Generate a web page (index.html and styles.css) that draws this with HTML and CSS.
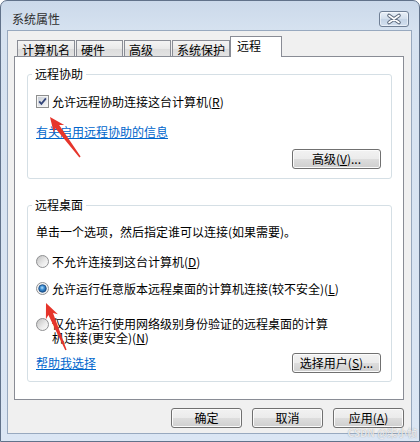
FILE: index.html
```html
<!DOCTYPE html>
<html lang="zh-CN">
<head>
    <meta charset="UTF-8">
    <title>系统属性</title>
    <link rel="stylesheet" href="styles.css">
</head>
<body>

<div class="window">
    <!-- shared gradients for the checkbox / radio glyphs -->
    <svg class="defs" width="0" height="0" aria-hidden="true">
        <defs>
            <linearGradient id="boxFill" x1="0" y1="0" x2="1" y2="1">
                <stop offset="0" stop-color="#c9ced6"/>
                <stop offset="1" stop-color="#f7f7f7"/>
            </linearGradient>
            <linearGradient id="radioFill" x1="0" y1="0" x2="1" y2="1">
                <stop offset="0" stop-color="#bdbdbd"/>
                <stop offset="0.6" stop-color="#ececec"/>
                <stop offset="1" stop-color="#fdfdfd"/>
            </linearGradient>
            <radialGradient id="radioDot" cx="0.45" cy="0.4" r="0.6">
                <stop offset="0" stop-color="#b9e2fb"/>
                <stop offset="0.45" stop-color="#3d8fd4"/>
                <stop offset="1" stop-color="#164f8f"/>
            </radialGradient>
        </defs>
    </svg>

    <div class="titlebar">
        <span class="title">系统属性</span>
        <button class="close-button" aria-label="关闭">
            <svg width="28" height="14" viewBox="0 0 28 14">
                <path d="M9 3.5 L19 10.5 M19 3.5 L9 10.5" stroke="#5b687b" stroke-width="3.6" stroke-linecap="round"/>
                <path d="M9 3.5 L19 10.5 M19 3.5 L9 10.5" stroke="#ffffff" stroke-width="1.6" stroke-linecap="round"/>
            </svg>
        </button>
    </div>

    <div class="client">
        <div class="tabs">
            <div class="tab">计算机名</div>
            <div class="tab">硬件</div>
            <div class="tab">高级</div>
            <div class="tab">系统保护</div>
            <div class="tab selected">远程</div>
        </div>

        <div class="tab-panel">
            <!-- Remote Assistance -->
            <fieldset class="group assist">
                <legend>远程协助</legend>
                <label class="option">
                    <svg class="glyph" width="13" height="13" viewBox="0 0 13 13">
                        <rect x="0.5" y="0.5" width="12" height="12" fill="#f4f4f4" stroke="#8e8f8f"/>
                        <rect x="2" y="2" width="9" height="9" fill="url(#boxFill)"/>
                        <path d="M3.2 6.4 L5.4 8.8 L9.9 3.4" fill="none" stroke="#34467a" stroke-width="1.8"/>
                    </svg>
                    <span>允许远程协助连接这台计算机(<u>R</u>)</span>
                </label>
                <p class="link-row"><a class="link" href="#">有关启用远程协助的信息</a></p>
                <div class="button-row">
                    <button class="btn wide">高级(<u>V</u>)...</button>
                </div>
            </fieldset>

            <!-- Remote Desktop -->
            <fieldset class="group desktop">
                <legend>远程桌面</legend>
                <p class="hint">单击一个选项，然后指定谁可以连接(如果需要)。</p>
                <label class="option first">
                    <svg class="glyph" width="13" height="13" viewBox="0 0 13 13">
                        <circle cx="6.5" cy="6.5" r="6" fill="url(#radioFill)" stroke="#8f9092"/>
                    </svg>
                    <span>不允许连接到这台计算机(<u>D</u>)</span>
                </label>
                <label class="option second">
                    <svg class="glyph" width="13" height="13" viewBox="0 0 13 13">
                        <circle cx="6.5" cy="6.5" r="6" fill="#f3f3f3" stroke="#8f9092"/>
                        <circle cx="6.5" cy="6.5" r="3.8" fill="url(#radioDot)" stroke="#1b4a80" stroke-width="0.8"/>
                    </svg>
                    <span>允许运行任意版本远程桌面的计算机连接(较不安全)(<u>L</u>)</span>
                </label>
                <label class="option third">
                    <svg class="glyph" width="13" height="13" viewBox="0 0 13 13">
                        <circle cx="6.5" cy="6.5" r="6" fill="url(#radioFill)" stroke="#8f9092"/>
                    </svg>
                    <span class="wrap">仅允许运行使用网络级别身份验证的远程桌面的计算<br>机连接(更安全)(<u>N</u>)</span>
                </label>
                <div class="button-row split">
                    <a class="link" href="#">帮助我选择</a>
                    <button class="btn wide">选择用户(<u>S</u>)...</button>
                </div>
            </fieldset>
        </div>

        <div class="dialog-buttons">
            <button class="btn">确定</button>
            <button class="btn">取消</button>
            <button class="btn">应用(<u>A</u>)</button>
        </div>
    </div>

    <!-- red annotation arrows drawn over the dialog -->
    <svg class="annotations" width="420" height="442" viewBox="0 0 420 442">
        <polygon fill="#e6352b" points="50,117 64.2,125.1 59.2,125.1 80.6,156.6 79.4,157.4 55.2,128.1 53.8,132.9"/>
        <polygon fill="#e6352b" points="46,303 57.9,314.3 53,313.1 66.6,349.7 65.3,350.2 48.4,315 45.9,319.3"/>
    </svg>

    <span class="watermark">CSDN @柒小帧</span>
</div>

</body>
</html>
```

FILE: styles.css
```css
/* Reset */
* { box-sizing: border-box; margin: 0; padding: 0; }
html, body { width: 420px; height: 442px; overflow: hidden; }
body {
    font-family: "Noto Sans CJK SC", "Noto Sans", sans-serif;
    font-size: 12px; color: #000; background: #ffffff;
}
u { text-decoration: underline; text-underline-offset: 1px; }

/* --- Window frame --- */
.window {
    position: relative;
    width: 420px; height: 442px;
    border: 1px solid #61728a;
    border-radius: 7px 7px 0 0;
    background: linear-gradient(#cbd9ea, #d6e2f0 30px, #dbe6f4);
    display: flex; flex-direction: column;
}
.defs { position: absolute; width: 0; height: 0; }

.titlebar {
    height: 29px;
    display: flex; align-items: flex-start; justify-content: space-between;
    padding: 10px 10px 0 11px;
}
.title { line-height: 16px; color: #2e2e2e; }
.close-button {
    width: 30px; height: 16px;
    border: 1px solid #6f7f95; border-radius: 3px;
    background: linear-gradient(#e9f0f8, #d2deec 50%, #c4d3e5 51%, #d3e0ef);
    box-shadow: inset 0 0 0 1px rgba(255,255,255,0.5);
    display: flex;
}

.client {
    flex: 1;
    margin: 0 7px 7px 6px;
    background: #f0f0f0;
    border: 1px solid #98a9bf;
    padding: 5px 7px 0 6px;
}

/* --- Tabs --- */
.tabs {
    display: flex; align-items: flex-end;
    height: 21px; margin-bottom: -1px;
    padding-left: 3px;
}
.tab {
    height: 17px; min-width: 47px;
    padding: 1px 4px 0;
    line-height: 15px;
    margin-right: 1px;
    border: 1px solid #898c95; border-bottom: none;
    background: linear-gradient(#f4f4f4, #e9e9e9 50%, #dcdcdc 51%, #e4e4e4);
}
.tab.selected {
    position: relative; z-index: 2;
    height: 21px; min-width: 52px;
    margin-left: -1px; margin-right: 0;
    padding: 1px 6px 0;
    background: #ffffff;
}

.tab-panel {
    position: relative; z-index: 1;
    height: 344px;
    background: #ffffff;
    border: 1px solid #898c95;
    padding: 10px 11px 0 12px;
}

/* --- Group boxes --- */
.group {
    border: 1px solid #d5dfe5; border-radius: 3px;
    padding: 0 10px 9px 8px;
}
.group legend {
    margin-left: -4px; padding: 0 3px;
    line-height: 14px;
}
.group.desktop { margin-top: 19px; padding-bottom: 8px; }

.option {
    display: flex; align-items: center; gap: 3px;
    height: 16px; margin-top: 12px;
}
.option .glyph { flex: none; }
.option.first { margin-top: 13px; }
.option.second { margin-top: 11px; }
.option.third {
    align-items: flex-start;
    height: auto; margin-top: 21px;
    line-height: 14px;
}
.option.third .glyph { margin-top: 1px; }
.option .wrap { width: 280px; }

.link-row { margin-top: 15px; line-height: 16px; }
.link { color: #0066cc; text-decoration: underline; line-height: 16px; }

.hint { margin-top: 12px; line-height: 16px; }

.button-row {
    display: flex; justify-content: flex-end;
    margin-top: 9px;
}
.button-row.split { justify-content: space-between; align-items: center; margin-top: 8px; }

/* --- Buttons --- */
.btn {
    height: 20px; width: 71px;
    font: inherit; color: #000; line-height: 16px;
    border: 1px solid #707070; border-radius: 3px;
    background: linear-gradient(#f2f2f2, #ebebeb 50%, #dddddd 51%, #cfcfcf);
    box-shadow: inset 0 0 0 1px #fbfbfb;
}
.btn.wide { width: 89px; }

.dialog-buttons {
    display: flex; justify-content: flex-end; gap: 10px;
    margin-top: 8px;
}

/* --- Overlays --- */
.annotations {
    position: absolute; top: -1px; left: -1px; z-index: 5;
    pointer-events: none;
}
.watermark {
    position: absolute; right: 2px; bottom: 3px; z-index: 5;
    font-size: 10px; line-height: 11px; font-weight: bold;
    color: rgba(255,255,255,0.75);
    text-shadow: 0 0 1px rgba(90,95,105,0.6);
}
```
